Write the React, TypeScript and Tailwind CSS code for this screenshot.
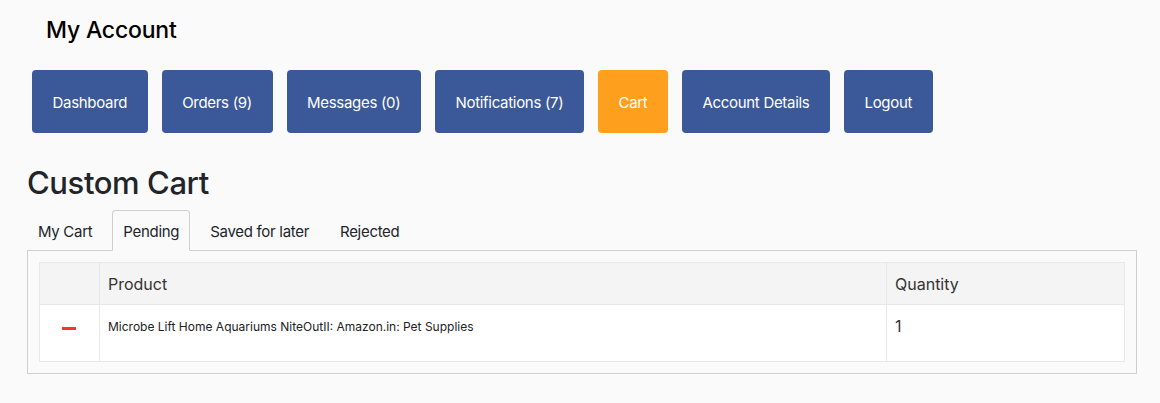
export default function App() {
  const navItems = [
    { label: "Dashboard", active: false },
    { label: "Orders (9)", active: false },
    { label: "Messages (0)", active: false },
    { label: "Notifications (7)", active: false },
    { label: "Cart", active: true },
    { label: "Account Details", active: false },
    { label: "Logout", active: false },
  ];
  const tabs = ["My Cart", "Pending", "Saved for later", "Rejected"];

  return (
    <div className="min-h-[403px] bg-[#fafafa] font-['Inter',sans-serif] text-[#212529]">
      <h1 className="pl-[46px] pt-[15px] text-[23px] leading-[30px] font-medium tracking-[-0.2px] text-black">
        My Account
      </h1>

      <div className="mt-[25px] flex gap-[14px] pl-[32px]">
        {navItems.map((item) => (
          <button
            key={item.label}
            className={`h-[63px] rounded px-[20.5px] pt-1 text-[15px] tracking-[-0.3px] text-white ${
              item.active ? "bg-[#ff9f1e]" : "bg-[#3b5998]"
            }`}
          >
            {item.label}
          </button>
        ))}
      </div>

      <h2 className="mt-[32px] pl-[27px] text-[31px] leading-[36px] font-medium tracking-[-0.4px] text-[#212529]">
        Custom Cart
      </h2>

      <div className="ml-[27px] mr-[23px] mt-[9px]">
        <div className="flex gap-[9px]">
          {tabs.map((tab) => (
            <div
              key={tab}
              className={`-mb-px h-[41px] rounded-t border px-[10px] pt-[10px] text-[15px] leading-[22px] tracking-[-0.3px] text-[#212529] ${
                tab === "Pending"
                  ? "border-[#cfcfcf] border-b-[#fafafa] bg-[#fafafa]"
                  : "border-transparent"
              }`}
            >
              {tab}
            </div>
          ))}
        </div>

        <div className="border border-[#cfcfcf] p-[11px]">
          <table className="w-full border-collapse border border-[#e8e8e8] text-left">
            <thead>
              <tr className="h-[42px] bg-[#f4f4f4]">
                <th className="w-[60px] border border-[#e8e8e8]"></th>
                <th className="border border-[#e8e8e8] px-2 text-[16px] font-normal text-[#333]">
                  Product
                </th>
                <th className="w-[238px] border border-[#e8e8e8] px-2 text-[16px] font-normal text-[#333]">
                  Quantity
                </th>
              </tr>
            </thead>
            <tbody>
              <tr className="h-[57px] bg-white align-top">
                <td className="border border-[#e8e8e8]">
                  <div className="ml-[22px] mt-[22px] h-[3px] w-[14px] bg-[#ff3420]" />
                </td>
                <td className="border border-[#e8e8e8] px-2 pt-[14px] text-[12px] leading-[16px] text-[#222]">
                  Microbe Lift Home Aquariums NiteOutII: Amazon.in: Pet Supplies
                </td>
                <td className="border border-[#e8e8e8] px-2 pt-[9px] text-[16px] leading-[24px] text-[#333]">
                  1
                </td>
              </tr>
            </tbody>
          </table>
        </div>
      </div>
    </div>
  );
}
